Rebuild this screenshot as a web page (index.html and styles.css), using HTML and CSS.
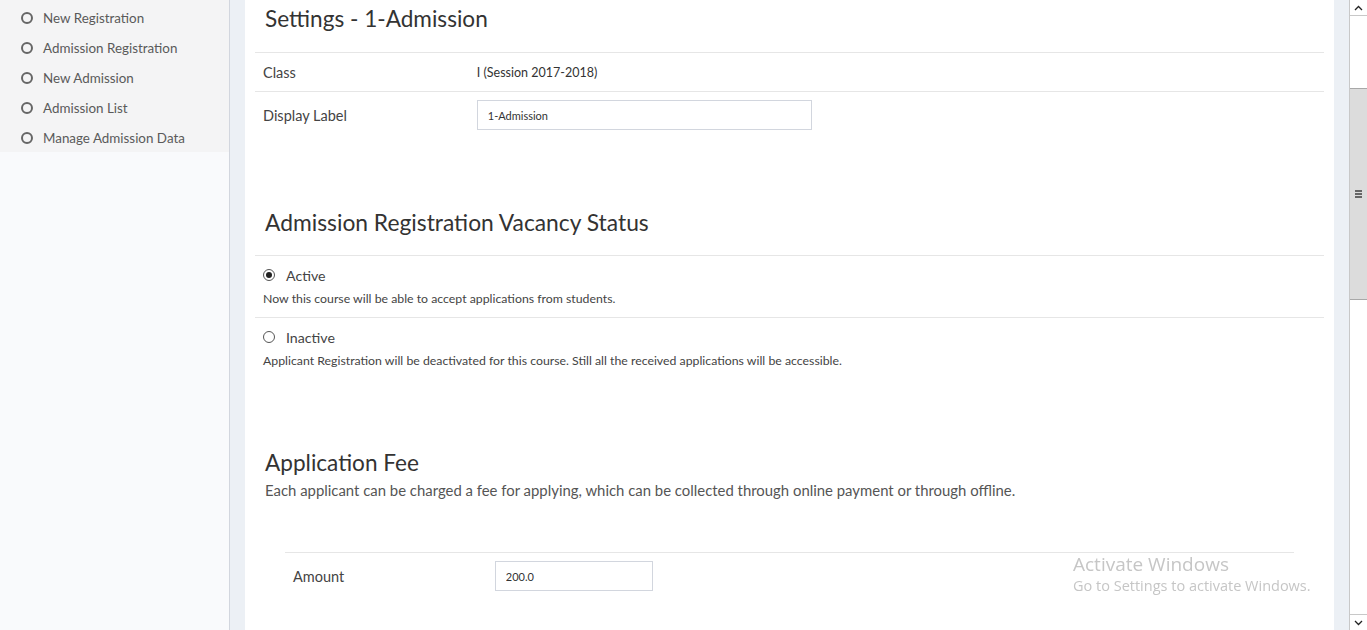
FILE: index.html
```html
<!DOCTYPE html>
<html>
<head>
<meta charset="utf-8">
<link rel="stylesheet" href="styles.css">
</head>
<body>
<div class="app">
  <aside class="sidebar">
    <ul class="menu">
      <li><span class="ring"></span>New Registration</li>
      <li><span class="ring"></span>Admission Registration</li>
      <li><span class="ring"></span>New Admission</li>
      <li><span class="ring"></span>Admission List</li>
      <li><span class="ring"></span>Manage Admission Data</li>
    </ul>
  </aside>
  <main class="content">
    <div class="box">
      <h2 class="title">Settings - 1-Admission</h2>
      <table class="form-table">
        <tr><td class="lbl">Class</td><td class="val">I (Session 2017-2018)</td></tr>
        <tr><td class="lbl">Display Label</td><td class="val"><input class="field wide" type="text" value="1-Admission"></td></tr>
      </table>

      <h2 class="title sec2">Admission Registration Vacancy Status</h2>
      <div class="options">
        <div class="opt">
          <label class="radio"><span class="dot checked"></span>Active</label>
          <p class="help">Now this course will be able to accept applications from students.</p>
        </div>
        <div class="opt">
          <label class="radio"><span class="dot"></span>Inactive</label>
          <p class="help">Applicant Registration will be deactivated for this course. Still all the received applications will be accessible.</p>
        </div>
      </div>

      <h2 class="title sec3">Application Fee</h2>
      <p class="lead">Each applicant can be charged a fee for applying, which can be collected through online payment or through offline.</p>
      <table class="form-table fee">
        <tr><td class="lbl">Amount</td><td class="val"><input class="field short" type="text" value="200.0"></td></tr>
      </table>
    </div>
  </main>
  <div class="scrollbar">
    <div class="sb-btn up"><svg width="9" height="6" viewBox="0 0 9 6"><path d="M1 5 L4.5 1.5 L8 5" fill="none" stroke="#222" stroke-width="1.3"/></svg></div>
    <div class="sb-track top"></div>
    <div class="sb-thumb"><span class="grip"></span></div>
    <div class="sb-track bottom"></div>
    <div class="sb-btn down"><svg width="9" height="6" viewBox="0 0 9 6"><path d="M1 1 L4.5 4.5 L8 1" fill="none" stroke="#222" stroke-width="1.3"/></svg></div>
  </div>
</div>
<div class="watermark">
  <div class="wm1">Activate Windows</div>
  <div class="wm2">Go to Settings to activate Windows.</div>
</div>
</body>
</html>
```
FILE: styles.css
```css
html, body {
  margin: 0;
  padding: 0;
  height: 100%;
  overflow: hidden;
}
body {
  font-family: Lato, "Liberation Sans", sans-serif;
  color: #333;
}
.app {
  display: flex;
  height: 630px;
}
.sidebar {
  width: 229px;
  flex: 0 0 229px;
  background: #f9fafc;
  border-right: 1px solid #d2d6de;
}
.menu {
  list-style: none;
  margin: 0;
  padding: 3px 0 0;
  background: #f4f4f5;
  height: 149px;
}
.menu li {
  height: 30px;
  line-height: 30px;
  font-size: 13.4px;
  color: #5a5a5a;
  display: flex;
  align-items: center;
  padding-left: 21px;
}
.ring {
  width: 8px;
  height: 8px;
  border: 2px solid #666;
  border-radius: 50%;
  margin-right: 10px;
  flex: 0 0 auto;
}
.content {
  flex: 1;
  background: #ecf0f5;
  padding: 0 15px;
  min-width: 0;
}
.box {
  background: #fff;
  height: 630px;
  padding: 0 10px;
}
.title {
  margin: 0;
  font-weight: 400;
  font-size: 22.6px;
  color: #333;
  padding: 6px 10px 0;
  height: 46px;
  line-height: 26px;
  border-bottom: 1px solid #e6e6e6;
}
.form-table {
  width: 100%;
  border-collapse: collapse;
  font-size: 14px;
}
.form-table td {
  padding: 8px;
  vertical-align: middle;
}
.form-table tr + tr td {
  border-top: 1px solid #e6e6e6;
}
.lbl {
  width: 20%;
  color: #444;
  font-size: 14.5px;
}
.val {
  font-size: 12.5px;
  color: #333;
}
.form-table tr:first-child td {
  height: 22px;
  padding-top: 8px;
  padding-bottom: 8px;
}
.field {
  height: 30px;
  box-sizing: border-box;
  border: 1px solid #d2d6de;
  font-family: inherit;
  font-size: 11px;
  color: #333;
  padding: 0 10px;
  margin: 0;
  display: block;
  background: #fff;
}
.wide { width: 335px; }
.short { width: 158px; }
.sec2 {
  margin-top: 54px;
  padding-top: 17px;
  box-sizing: border-box;
  height: 64px;
  font-size: 22.8px;
}
.options .opt {
  padding: 9px 8px 10px;
}
.options .opt + .opt {
  border-top: 1px solid #e6e6e6;
}
.radio {
  display: flex;
  align-items: center;
  font-size: 14.2px;
  color: #444;
  height: 20px;
}
.dot {
  width: 10px;
  height: 10px;
  border: 1px solid #555;
  border-radius: 50%;
  margin-right: 11px;
  position: relative;
  background: #fff;
  flex: 0 0 auto;
}
.dot.checked::after {
  content: "";
  position: absolute;
  left: 2px;
  top: 2px;
  width: 6px;
  height: 6px;
  border-radius: 50%;
  background: #222;
}
.help {
  margin: 6px 0 0;
  font-size: 12.3px;
  color: #444;
  line-height: 16px;
}
.sec3 {
  margin-top: 70px;
  border-bottom: none;
  height: auto;
  padding-top: 0;
  line-height: 28px;
}
.lead {
  margin: 0;
  padding: 0 10px;
  font-size: 14.9px;
  color: #555;
  line-height: 22px;
  padding-top: 2px;
}
.fee {
  width: calc(100% - 60px);
  margin: 51px 30px 0;
  border-top: 1px solid #e6e6e6;
}
.fee td {
  padding-top: 8px;
}
.scrollbar {
  width: 17px;
  flex: 0 0 17px;
  background: #fff;
  border-left: 1px solid #c8c8c8;
  display: flex;
  flex-direction: column;
}
.sb-btn {
  height: 15px;
  display: flex;
  align-items: center;
  justify-content: center;
  flex: 0 0 auto;
}
.sb-btn.up { border-bottom: 1px solid #c8c8c8; }
.sb-btn.down { border-top: 1px solid #c8c8c8; }
.sb-track.top { height: 72px; }
.sb-track.bottom { flex: 1; }
.sb-thumb {
  height: 210px;
  background: #dcdcdc;
  border-top: 1px solid #a8a8a8;
  border-bottom: 1px solid #a8a8a8;
  display: flex;
  align-items: center;
  justify-content: center;
}
.grip {
  width: 7px;
  height: 2px;
  background: #666;
  box-shadow: 0 -3px 0 #666, 0 3px 0 #666;
}
.watermark {
  position: fixed;
  left: 1073px;
  top: 552px;
  color: #c6c6c6;
  font-family: "Open Sans", "Noto Sans", sans-serif;
  pointer-events: none;
}
.wm1 { font-size: 19px; line-height: 24px; }
.wm2 { font-size: 14.5px; line-height: 20px; }
```
